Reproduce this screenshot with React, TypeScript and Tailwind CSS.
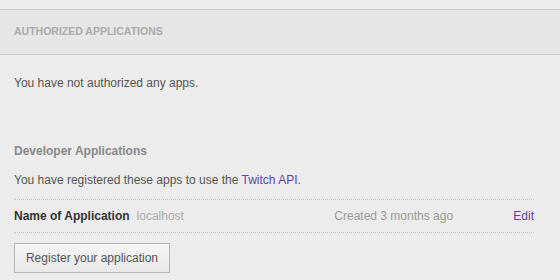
export default function App() {
  return (
    <div className="h-[280px] w-[560px] bg-[#ececec] pt-[9px] font-['Liberation_Sans',Arial,sans-serif] text-[12px] text-[#555]">
      {/* Authorized apps header */}
      <div className="flex h-[46px] items-center border-y border-[#cbcbcb] bg-[#e6e6e6] px-[14px]">
        <h2 className="text-[10.5px] font-bold uppercase text-[#aaa]">Authorized Applications</h2>
      </div>

      <div className="pl-[14px] pr-[26px]">
        <p className="mt-[19px] leading-[18px]">You have not authorized any apps.</p>

        <h3 className="mt-[50px] font-bold leading-[18px] text-[#888]">Developer Applications</h3>
        <p className="mt-[11px] leading-[18px]">
          You have registered these apps to use the <a className="text-[#6441a5]">Twitch API</a>.
        </p>

        <div className="mt-[10px] flex h-[34px] items-center border-y border-dotted border-[#c4c4c4]">
          <span className="font-bold text-[#333]">Name of Application</span>
          <span className="ml-[7px] text-[#aaa]">localhost</span>
          <span className="ml-auto w-[179px] text-[#999]">Created 3 months ago</span>
          <a className="text-[#6441a5]">Edit</a>
        </div>

        <button className="mt-[10px] h-[30px] w-[156px] border border-[#b5b5b5] bg-gradient-to-b from-[#f6f6f6] to-[#e8e8e8] text-[12px] text-[#555] shadow-[inset_0_1px_0_#fff]">
          Register your application
        </button>
      </div>
    </div>
  );
}
